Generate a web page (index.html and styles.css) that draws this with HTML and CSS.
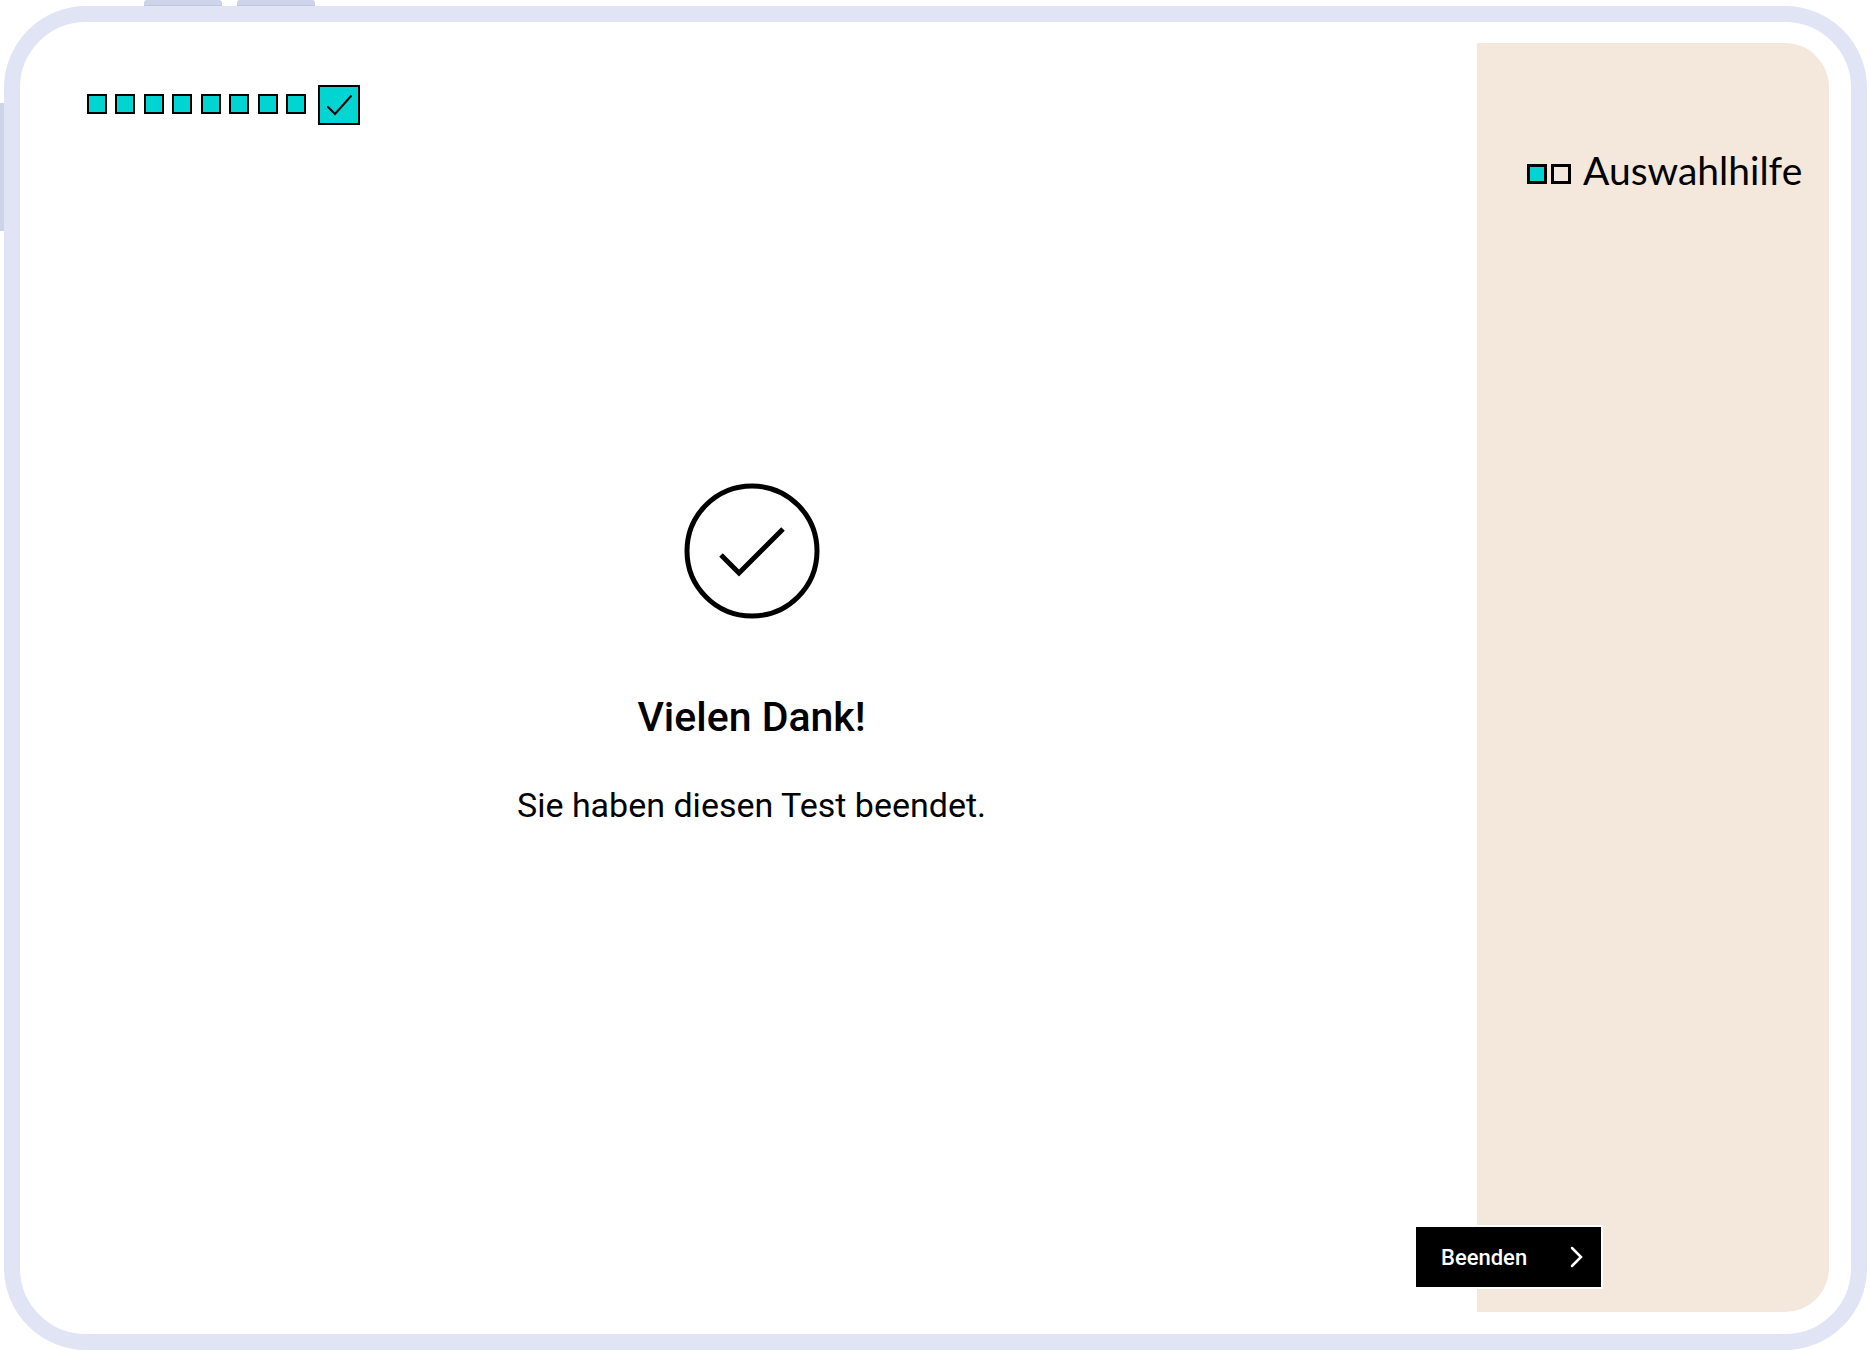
FILE: index.html
```html
<!DOCTYPE html>
<html lang="de">
<head>
    <meta charset="UTF-8">
    <meta name="viewport" content="width=device-width, initial-scale=1.0">
    <title>Auswahlhilfe</title>
    <link rel="stylesheet" href="styles.css">
</head>
<body>
    <div class="device">
        <div class="top-keys">
            <span class="key"></span>
            <span class="key"></span>
        </div>
        <span class="side-key"></span>
        <div class="screen">
            <main class="content">
                <div class="progress">
                    <div class="steps">
                        <span class="box filled"></span>
                        <span class="box filled"></span>
                        <span class="box filled"></span>
                        <span class="box filled"></span>
                        <span class="box filled"></span>
                        <span class="box filled"></span>
                        <span class="box filled"></span>
                        <span class="box filled"></span>
                    </div>
                    <svg class="step-done" viewBox="0 0 42 40">
                        <rect x="1" y="1" width="40" height="38" fill="#00d5d2" stroke="#000" stroke-width="2"/>
                        <path d="M10 22l7 7L33 11" fill="none" stroke="#000" stroke-width="2" stroke-linecap="round"/>
                    </svg>
                </div>
                <div class="message">
                    <svg class="check" viewBox="0 0 136 136">
                        <circle cx="68" cy="68" r="65" fill="none" stroke="#000" stroke-width="5"/>
                        <path d="M37 72l18 18L99 46" fill="none" stroke="#000" stroke-width="5"/>
                    </svg>
                    <h1>Vielen Dank!</h1>
                    <p>Sie haben diesen Test beendet.</p>
                </div>
            </main>
            <aside class="sidebar">
                <div class="brand">
                    <span class="box filled"></span>
                    <span class="box"></span>
                    <h2>Auswahlhilfe</h2>
                </div>
                <button class="finish" type="button">
                    Beenden
                    <svg class="arrow" viewBox="0 0 14 22">
                        <path d="M2 2l9 9-9 9" fill="none" stroke="#fff" stroke-width="2.5" stroke-linecap="round"/>
                    </svg>
                </button>
            </aside>
        </div>
    </div>
</body>
</html>
```

FILE: styles.css
```css
* {
    box-sizing: border-box;
}

body {
    margin: 0;
    background: #fff;
    color: #000;
    font-family: Roboto, sans-serif;
}

.device {
    display: grid;
    grid-template-columns: 4px 1fr;
    grid-template-rows: 6px 1fr;
    min-height: 100vh;
    padding-right: 3px;
}

/* hardware keys on the tablet frame */
.top-keys {
    grid-column: 2;
    display: flex;
    gap: 15px;
    padding-left: 140px;
}

.key {
    width: 78px;
    background: #cdd3e8;
    border-bottom: 1px solid #c1c6de;
    border-radius: 3px 3px 0 0;
}

.side-key {
    height: 128px;
    margin-top: 97px;
    background: #cdd3e8;
}

.screen {
    display: flex;
    padding: 21px 22px 22px 0;
    border: 16px solid #e1e4f4;
    border-radius: 82px;
}

.content {
    flex: 1;
    display: flex;
    flex-direction: column;
    padding: 42px 61px 0 67px;
}

.progress {
    display: flex;
    align-items: center;
    gap: 12px;
}

.steps {
    display: flex;
    justify-content: space-between;
    width: 219px;
    padding-bottom: 2px;
}

.box {
    flex-shrink: 0;
    width: 20px;
    height: 20px;
    border: 2px solid #000;
}

.filled {
    background: #00d5d2;
}

.step-done {
    width: 42px;
    height: 40px;
}

.message {
    flex: 1;
    display: flex;
    flex-direction: column;
    align-items: center;
    justify-content: center;
    padding-bottom: 128px;
    text-align: center;
}

.check {
    width: 136px;
    height: 136px;
}

h1 {
    margin: 72px 0 40px;
    font-size: 41px;
    font-weight: 500;
    line-height: 52px;
}

p {
    margin: 0;
    font-size: 34px;
    line-height: 44px;
}

.sidebar {
    position: relative;
    width: 352px;
    padding: 105px 20px 0 50px;
    background: #f4e7dc;
    border-radius: 0 44px 44px 0;
}

.brand {
    display: flex;
    align-items: center;
    gap: 4px;
}

.brand .box {
    margin-top: 8px;
    border-width: 3px;
}

h2 {
    margin: 0 0 0 8px;
    font-family: Lato, sans-serif;
    font-size: 39px;
    font-weight: 400;
    line-height: 44px;
}

/* sits across the edge between content and sidebar */
.finish {
    position: absolute;
    left: -61px;
    bottom: 25px;
    display: flex;
    align-items: center;
    justify-content: space-between;
    width: 185px;
    height: 60px;
    padding: 0 17px 0 25px;
    border: none;
    background: #000;
    box-shadow: 0 0 0 2px #fff;
    color: #fff;
    font-family: Roboto, sans-serif;
    font-size: 22px;
    font-weight: 500;
    cursor: pointer;
}

.arrow {
    width: 14px;
    height: 22px;
}
```
